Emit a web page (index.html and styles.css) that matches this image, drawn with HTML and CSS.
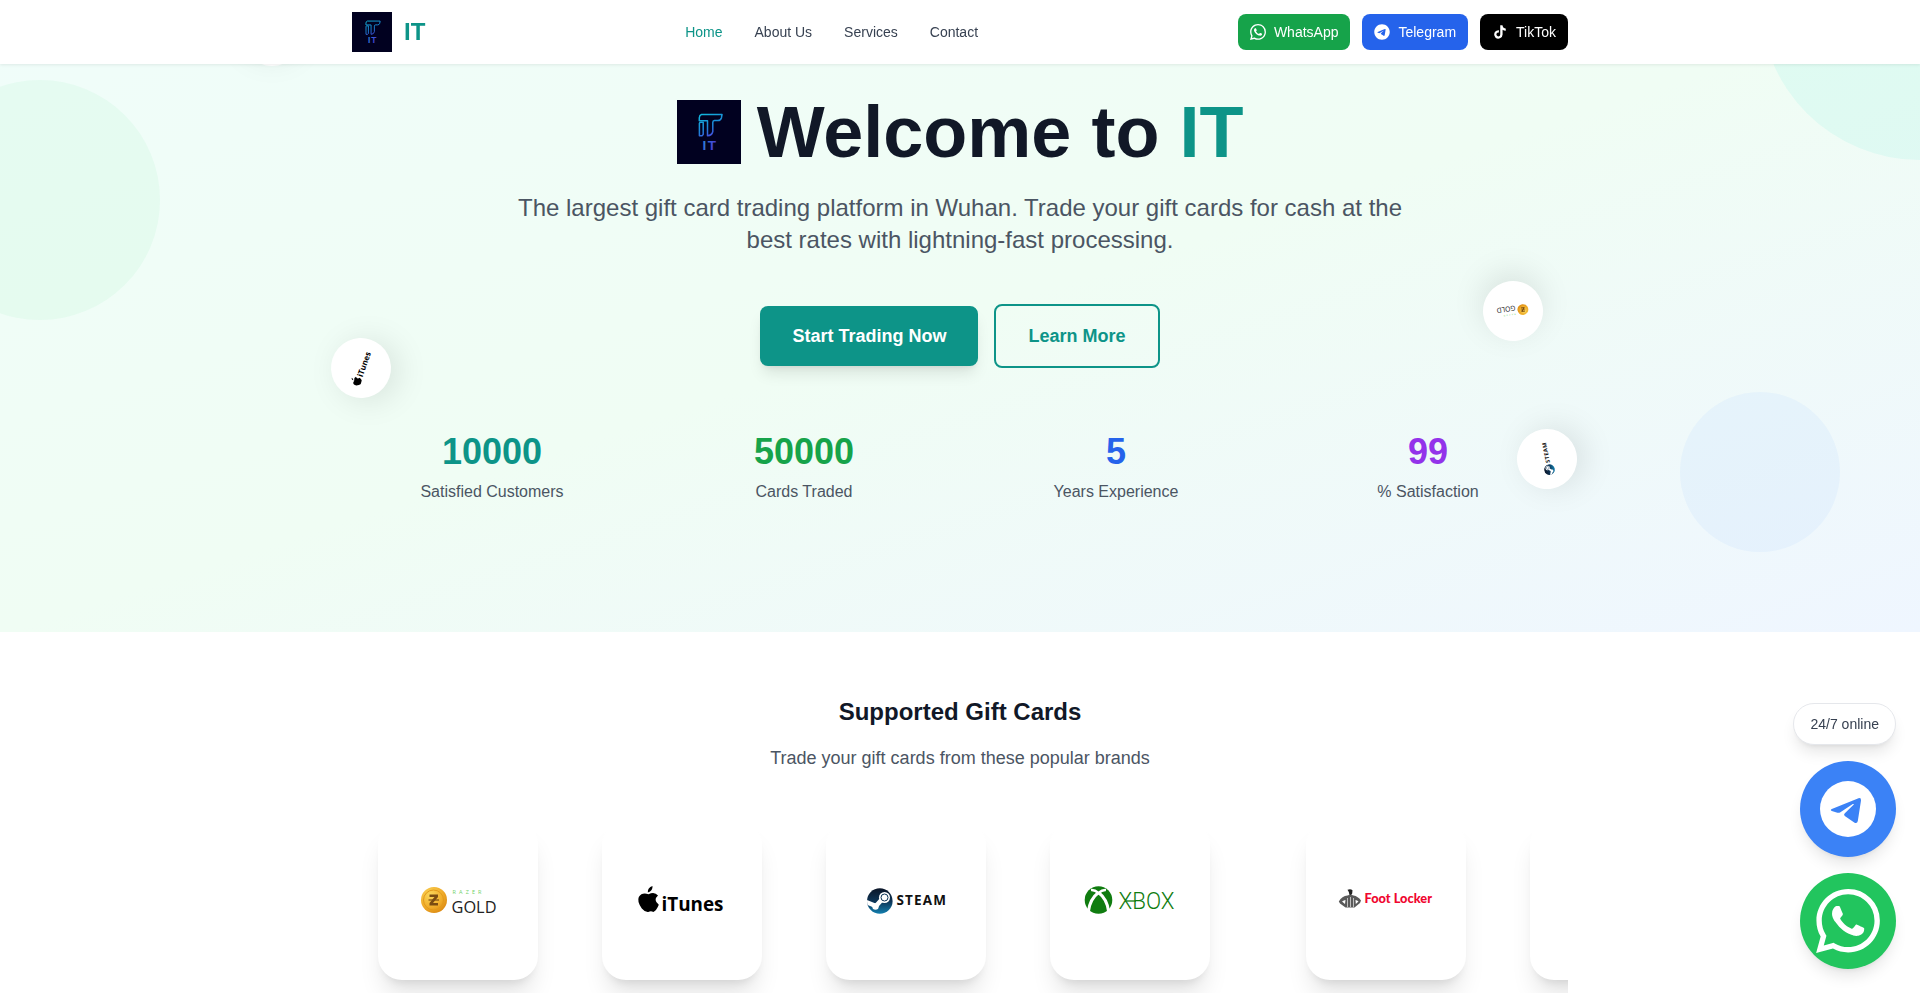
FILE: index.html
```html
<!DOCTYPE html>
<html lang="en">
<head>
    <meta charset="utf-8" />
    <title>IT - Gift Card Trading</title>
    <meta content="width=device-width, initial-scale=1" name="viewport" />
    <link rel="stylesheet" href="styles.css">
</head>
<body>
    <!-- shared icons and brand logos -->
    <svg class="sprite" width="0" height="0">
        <defs>
            <linearGradient id="neon" gradientUnits="userSpaceOnUse" x1="26" y1="14" x2="38" y2="40">
                <stop offset="0" stop-color="#12b5dc"/>
                <stop offset="0.5" stop-color="#1c86d8"/>
                <stop offset="1" stop-color="#5a2ee0"/>
            </linearGradient>
            <linearGradient id="neon-text" x1="0" y1="0" x2="1" y2="0.4">
                <stop offset="0" stop-color="#2a8fd8"/>
                <stop offset="1" stop-color="#4a30d8"/>
            </linearGradient>
            <linearGradient id="steam-fill" x1="0" y1="0" x2="0" y2="1">
                <stop offset="0" stop-color="#0b1426"/>
                <stop offset="0.5" stop-color="#0d3557"/>
                <stop offset="1" stop-color="#1387b8"/>
            </linearGradient>
            <radialGradient id="coin-fill" cx="0.35" cy="0.3" r="0.8">
                <stop offset="0" stop-color="#fbd75a"/>
                <stop offset="0.6" stop-color="#f0ad2b"/>
                <stop offset="1" stop-color="#d98510"/>
            </radialGradient>
            <symbol id="logo" viewBox="0 0 64 64">
                <rect width="64" height="64" fill="#010120"/>
                <g fill="none" stroke="url(#neon)" stroke-width="1.5" stroke-linejoin="round">
                    <path d="M24.500 14.500H45l-.6 3.500q-.8 2.600-3.400 2.600h-3.500q-1.700.2-1.700 2V31.500q-.8 4-5.300 4.200v-15h-8.200v-3q.2-2.600 2.200-3.200z"/>
                    <path d="M22.400 23.400q.2-1.200 1.200-1.200h2.600v12.300l-1.200 1.200h-2.600z"/>
                </g>
                <text x="25.500" y="50" font-size="13.500" textLength="13.500" class="logo-text" fill="url(#neon-text)">IT</text>
            </symbol>
            <symbol id="whatsapp" viewBox="0 0 24 24">
                <path fill="currentColor" d="M17.472 14.382c-.297-.149-1.758-.867-2.030-.967-.273-.099-.471-.148-.670.150-.197.297-.767.966-.940 1.164-.173.199-.347.223-.644.075-.297-.150-1.255-.463-2.390-1.475-.883-.788-1.480-1.761-1.653-2.059-.173-.297-.018-.458.130-.606.134-.133.298-.347.446-.520.149-.174.198-.298.298-.497.099-.198.050-.371-.025-.520-.075-.149-.669-1.612-.916-2.207-.242-.579-.487-.500-.669-.510-.173-.008-.371-.010-.570-.010-.198 0-.520.074-.792.372-.272.297-1.040 1.016-1.040 2.479 0 1.462 1.065 2.875 1.213 3.074.149.198 2.096 3.200 5.077 4.487.709.306 1.262.489 1.694.625.712.227 1.360.195 1.871.118.571-.085 1.758-.719 2.006-1.413.248-.694.248-1.289.173-1.413-.074-.124-.272-.198-.570-.347m-5.421 7.403h-.004a9.870 9.870 0 01-5.031-1.378l-.361-.214-3.741.982.998-3.648-.235-.374a9.860 9.860 0 01-1.510-5.260c.001-5.450 4.436-9.884 9.888-9.884 2.640 0 5.122 1.030 6.988 2.898a9.825 9.825 0 012.893 6.994c-.003 5.450-4.437 9.884-9.885 9.884m8.413-18.297A11.815 11.815 0 0012.050 0C5.495 0 .160 5.335.157 11.892c0 2.096.547 4.142 1.588 5.945L.057 24l6.305-1.654a11.882 11.882 0 005.683 1.448h.005c6.554 0 11.890-5.335 11.893-11.893a11.821 11.821 0 00-3.480-8.413z"/>
            </symbol>
            <symbol id="telegram" viewBox="0 0 496 512">
                <path fill="currentColor" d="M248 8C111.033 8 0 119.033 0 256s111.033 248 248 248 248-111.033 248-248S384.967 8 248 8zm114.952 168.660c-3.732 39.215-19.881 134.378-28.100 178.300-3.476 18.584-10.322 24.816-16.948 25.425-14.400 1.326-25.338-9.517-39.287-18.661-21.827-14.308-34.158-23.215-55.346-37.177-24.485-16.135-8.612-25 5.342-39.500 3.652-3.793 67.107-61.510 68.335-66.746.153-.655.300-3.100-1.154-4.384s-3.590-.849-5.135-.500q-3.283.746-104.608 69.142-14.845 10.194-26.894 9.934c-8.855-.191-25.888-5.006-38.551-9.123-15.531-5.048-27.875-7.717-26.800-16.291q.840-6.700 18.450-13.700 108.446-47.248 144.628-62.300c68.872-28.647 83.183-33.623 92.511-33.789 2.052-.034 6.639.474 9.610 2.885a10.452 10.452 0 013.530 6.716 43.765 43.765 0 01.417 9.769z"/>
            </symbol>
            <symbol id="plane" viewBox="0 0 56 56">
                <circle cx="28" cy="28" r="28" fill="#fff"/>
                <path fill="#3b82f6" d="M11.800 28 38.500 17.200q2.800-.6 2.500 2.300L37.800 40q-.6 3-3.200 1.700L24.800 35q-1.400-1.200-.2-2.600l9.200-8.900q.3-1-1-.4L20 31.500q-1.200.6-2.600.2L11.800 30q-2-1 0-2z"/>
            </symbol>
            <symbol id="tiktok" viewBox="0 0 24 24">
                <path fill="currentColor" d="M19.590 6.690a4.830 4.830 0 01-3.770-4.250V2h-3.450v13.670a2.890 2.890 0 01-5.200 1.740 2.890 2.890 0 012.310-4.640 2.930 2.930 0 01.880.130V9.400a6.840 6.840 0 00-1-.050A6.330 6.330 0 005 20.100a6.340 6.340 0 0010.860-4.430v-7a8.160 8.160 0 004.770 1.520v-3.400a4.850 4.850 0 01-1-.100z"/>
            </symbol>
            <symbol id="razer" viewBox="0 0 96 96">
                <circle cx="24" cy="48" r="13" fill="url(#coin-fill)"/>
                <circle cx="23.500" cy="48" r="10" fill="none" stroke="#e39a1b" stroke-width="1"/>
                <path d="M19.500 42.500h8.500v2.500l-5 6h5v2.500h-8.500v-2.500l5-6h-5z" fill="#7a4c12"/>
                <path d="M18.500 48h10.500" stroke="#7a4c12" stroke-width="1.200"/>
                <text x="42.500" y="42" font-size="5.500" textLength="29" class="brand-text" fill="#6fd168">RAZER</text>
                <text x="41.500" y="60.500" font-size="17" textLength="45" lengthAdjust="spacingAndGlyphs" class="brand-text thin" fill="#222">GOLD</text>
            </symbol>
            <symbol id="itunes" viewBox="0 0 96 96">
                <path d="M13.800 40.500q-.3-4.800 4.700-6.500.5 4.800-4.700 6.500z" fill="#000"/>
                <path d="M14.500 42.300q6-3.200 9.500 1.200-5.200 4.500.8 9.300-2.300 6-5.500 7.200-2.300-1.300-5 0-3 .5-6.500-3.500-5-7-3-11.500Q8 40 14.500 42.300z" fill="#000"/>
                <text x="27.500" y="59" font-size="19.500" textLength="62" lengthAdjust="spacingAndGlyphs" class="brand-text bold" fill="#000">iTunes</text>
            </symbol>
            <symbol id="steam" viewBox="0 0 96 96">
                <clipPath id="steam-clip"><circle cx="21.800" cy="49" r="12.800"/></clipPath>
                <g clip-path="url(#steam-clip)">
                    <rect x="8" y="36" width="28" height="27" fill="url(#steam-fill)"/>
                    <path d="M7 49.500 18 54l8-9" fill="none" stroke="#fff" stroke-width="4.500"/>
                    <circle cx="26.500" cy="45.500" r="5.500" fill="#fff"/>
                    <circle cx="26.500" cy="45.500" r="3.500" fill="#fff" stroke="#0d3557" stroke-width="1"/>
                    <circle cx="17.500" cy="54.500" r="3.200" fill="#fff"/>
                </g>
                <text x="38.500" y="53.300" font-size="13.500" textLength="49.500" class="brand-text bold" fill="#111">STEAM</text>
            </symbol>
            <symbol id="xbox" viewBox="0 0 96 96">
                <circle cx="16.500" cy="48" r="13.800" fill="#107c10"/>
                <path d="M9 38q3.500-.5 7.500 3 4-3.500 7.500-3" fill="none" stroke="#fff" stroke-width="2.400"/>
                <path d="M16.500 40.500Q8 47 6.500 59M16.500 40.500Q25 47 26.500 59" fill="none" stroke="#fff" stroke-width="3"/>
                <text x="36.500" y="57" font-size="23" textLength="56" lengthAdjust="spacingAndGlyphs" class="brand-text xbox-text" fill="#107c10">XBOX</text>
                <path d="M44 49h10" stroke="#107c10" stroke-width="1.300"/>
            </symbol>
            <symbol id="footlocker" viewBox="0 0 96 96">
                <path d="M9.500 37.800q3-1.500 5 .4l-.3 3.300-1 1.500h-1.700l-.7-3z" fill="#222"/>
                <path d="M9.500 43.500q3-1.500 6 0 4.500.8 7.500 5l-1 2.500-5.500 4.500h-9L2 51.500.8 49.500q3.200-5.500 8.700-6z" fill="#5a5a5a"/>
                <path d="M9.500 46v9M12.500 45v10M15.500 46v9" stroke="#d8d8d8" stroke-width=".8" fill="none"/>
                <path d="M4 49.500q2-1.500 3.500-1.500l-.5 4zM20.500 49.500q-1.500-1.500-3-1.500l.3 4z" fill="#fff"/>
                <text x="26.500" y="51.300" font-size="13" textLength="67.500" lengthAdjust="spacingAndGlyphs" class="brand-text locker-text" fill="#f0062f">Foot Locker</text>
            </symbol>
        </defs>
    </svg>

    <header class="header">
        <div class="container header-inner">
            <a class="brand" href="#">
                <svg class="brand-logo"><use href="#logo"/></svg>
                <span>IT</span>
            </a>
            <nav class="nav">
                <a class="active" href="#">Home</a>
                <a href="#">About Us</a>
                <a href="#">Services</a>
                <a href="#">Contact</a>
            </nav>
            <div class="socials">
                <a class="social social-whatsapp" href="#"><svg><use href="#whatsapp"/></svg>WhatsApp</a>
                <a class="social social-telegram" href="#"><svg><use href="#telegram"/></svg>Telegram</a>
                <a class="social social-tiktok" href="#"><svg><use href="#tiktok"/></svg>TikTok</a>
            </div>
        </div>
    </header>

    <section class="hero">
        <div class="blob blob-teal"></div>
        <div class="blob blob-green"></div>
        <div class="blob blob-blue"></div>
        <div class="floating float-xbox"></div>
        <div class="floating float-itunes"><svg><use href="#itunes"/></svg></div>
        <div class="floating float-razer"><svg><use href="#razer"/></svg></div>
        <div class="floating float-steam"><svg><use href="#steam"/></svg></div>

        <div class="container hero-inner">
            <div class="hero-title">
                <svg class="hero-logo"><use href="#logo"/></svg>
                <h1>Welcome to <span>IT</span></h1>
            </div>
            <p class="hero-text">The largest gift card trading platform in Wuhan. Trade your gift cards for cash at the best rates with lightning-fast processing.</p>
            <div class="hero-actions">
                <a class="btn btn-primary" href="#">Start Trading Now</a>
                <a class="btn btn-outline" href="#">Learn More</a>
            </div>
            <div class="stats">
                <div class="stat teal"><strong>10000</strong><span>Satisfied Customers</span></div>
                <div class="stat green"><strong>50000</strong><span>Cards Traded</span></div>
                <div class="stat blue"><strong>5</strong><span>Years Experience</span></div>
                <div class="stat purple"><strong>99</strong><span>% Satisfaction</span></div>
            </div>
        </div>
    </section>

    <section class="cards">
        <div class="container">
            <h2>Supported Gift Cards</h2>
            <p class="cards-text">Trade your gift cards from these popular brands</p>
            <div class="marquee">
                <div class="marquee-group">
                    <div class="card"><svg><use href="#razer"/></svg></div>
                    <div class="card"><svg><use href="#itunes"/></svg></div>
                    <div class="card"><svg><use href="#steam"/></svg></div>
                    <div class="card"><svg><use href="#xbox"/></svg></div>
                </div>
                <div class="marquee-group">
                    <div class="card"><svg><use href="#footlocker"/></svg></div>
                    <div class="card"></div>
                </div>
            </div>
        </div>
    </section>

    <div class="contact">
        <div class="contact-label">24/7 online</div>
        <a class="contact-btn contact-telegram" href="#"><svg><use href="#plane"/></svg></a>
        <a class="contact-btn contact-whatsapp" href="#"><svg><use href="#whatsapp"/></svg></a>
    </div>
</body>
</html>
```

FILE: styles.css
```css
*{
    box-sizing: border-box;
    margin: 0;
    padding: 0;
}
html,body{
    height: 100%;
    overflow: hidden;
}
body{
    font-family: "Liberation Sans", Arial, sans-serif;
    font-size: 16px;
    line-height: 24px;
    color: #111827;
    background: #fff;
}
a{
    color: inherit;
    text-decoration: none;
}
svg{
    display: block;
    flex: none;
}
.sprite{
    position: absolute;
}
.container{
    max-width: 1280px;
    margin: 0 auto;
    padding: 0 32px;
}
.logo-text{
    font-family: "Liberation Sans", Arial, sans-serif;
    font-weight: 700;
}
.brand-text{font-family: "Open Sans", "Noto Sans", sans-serif;}
.brand-text.bold{font-weight: 700;}
.brand-text.thin{font-weight: 400;}
.brand-text.xbox-text{
    font-family: Roboto, sans-serif;
    font-weight: 300;
}
.brand-text.locker-text{
    font-family: Lato, sans-serif;
    font-weight: 900;
}

/* header */
.header{
    position: fixed;
    top: 0;
    left: 0;
    right: 0;
    z-index: 50;
    height: 64px;
    background: #fff;
    box-shadow: 0 1px 3px rgba(0,0,0,.08);
}
.header-inner{
    display: flex;
    align-items: center;
    justify-content: space-between;
    height: 64px;
}
.brand{
    display: flex;
    align-items: center;
    gap: 12px;
    font-size: 24px;
    line-height: 32px;
    font-weight: 700;
    color: #0d9488;
}
.brand-logo{
    width: 40px;
    height: 40px;
}
.nav{
    display: flex;
    gap: 32px;
    font-size: 14px;
    line-height: 20px;
    color: #374151;
}
.nav .active{
    color: #0d9488;
}
.socials{
    display: flex;
    gap: 12px;
}
.social{
    display: flex;
    align-items: center;
    gap: 8px;
    padding: 8px 12px;
    border-radius: 8px;
    font-size: 14px;
    line-height: 20px;
    color: #fff;
}
.social svg{
    width: 16px;
    height: 16px;
}
.social-whatsapp{background: #16a34a;}
.social-telegram{background: #2563eb;}
.social-tiktok{background: #000;}

/* hero */
.hero{
    position: relative;
    overflow: hidden;
    height: 632px;
    padding-top: 96px;
    background: linear-gradient(to bottom right, #f0fdfa, #f0fdf4, #eff6ff);
}
.hero-inner{
    position: relative;
    text-align: center;
}
.blob{
    position: absolute;
    border-radius: 50%;
}
.blob-teal{
    top: -160px;
    right: -160px;
    width: 320px;
    height: 320px;
    background: rgba(153,246,228,.2);
}
.blob-green{
    top: 80px;
    left: -80px;
    width: 240px;
    height: 240px;
    background: rgba(187,247,208,.2);
}
.blob-blue{
    right: 80px;
    bottom: 80px;
    width: 160px;
    height: 160px;
    background: rgba(191,219,254,.2);
}
.floating{
    position: absolute;
    display: flex;
    align-items: center;
    justify-content: center;
    width: 60px;
    height: 60px;
    border-radius: 50%;
    background: #fff;
    box-shadow: 0 8px 32px rgba(0,0,0,.1);
}
.floating svg{
    width: 40px;
    height: 40px;
}
.float-xbox{
    top: 6px;
    left: 242px;
    transform: rotate(180deg);
}
.float-itunes{
    top: 338px;
    left: 331px;
    transform: rotate(-71deg);
}
.float-razer{
    top: 281px;
    left: 1483px;
    transform: rotate(172deg);
}
.float-steam{
    top: 429px;
    left: 1517px;
    transform: rotate(-101deg);
}
.hero-title{
    display: flex;
    align-items: center;
    justify-content: center;
    gap: 16px;
    margin-bottom: 24px;
}
.hero-logo{
    width: 64px;
    height: 64px;
}
.hero-title h1{
    font-size: 72px;
    line-height: 72px;
    font-weight: 700;
}
.hero-title span{
    color: #0d9488;
}
.hero-text{
    max-width: 896px;
    margin: 0 auto 48px;
    font-size: 24px;
    line-height: 32px;
    color: #4b5563;
}
.hero-actions{
    display: flex;
    align-items: center;
    justify-content: center;
    gap: 16px;
    margin-bottom: 64px;
}
.btn{
    padding: 16px 32px;
    border-radius: 8px;
    font-size: 18px;
    line-height: 28px;
    font-weight: 700;
}
.btn-primary{
    background: #0d9488;
    color: #fff;
    box-shadow: 0 10px 15px -3px rgba(0,0,0,.1), 0 4px 6px -4px rgba(0,0,0,.1);
}
.btn-outline{
    border: 2px solid #0d9488;
    color: #0d9488;
}
.stats{
    display: grid;
    grid-template-columns: repeat(4, 1fr);
    gap: 32px;
}
.stat{
    display: flex;
    flex-direction: column;
    gap: 8px;
}
.stat strong{
    font-size: 36px;
    line-height: 40px;
}
.stat span{
    color: #4b5563;
}
.teal strong{color: #0d9488;}
.green strong{color: #16a34a;}
.blue strong{color: #2563eb;}
.purple strong{color: #9333ea;}

/* supported cards */
.cards{
    padding-top: 64px;
    text-align: center;
}
.cards h2{
    margin-bottom: 16px;
    font-size: 24px;
    line-height: 32px;
    font-weight: 700;
}
.cards-text{
    font-size: 18px;
    line-height: 28px;
    color: #4b5563;
}
.marquee{
    display: flex;
    gap: 96px;
    overflow: hidden;
    margin-top: 32px;
    padding: 16px 0 40px 25.5px;
}
.marquee-group{
    display: flex;
    flex: none;
    gap: 64px;
}
.card{
    display: flex;
    flex: none;
    align-items: center;
    justify-content: center;
    width: 160px;
    height: 160px;
    border-radius: 24px;
    background: #fff;
    box-shadow: 0 20px 25px -5px rgba(0,0,0,.1), 0 8px 10px -6px rgba(0,0,0,.1);
}
.card svg{
    width: 96px;
    height: 96px;
}

/* contact buttons */
.contact{
    position: fixed;
    right: 24px;
    bottom: 24px;
    z-index: 50;
    display: flex;
    flex-direction: column;
    align-items: flex-end;
    gap: 16px;
}
.contact-label{
    padding: 10px 16px;
    border: 1px solid #e5e7eb;
    border-radius: 21px;
    background: #fff;
    box-shadow: 0 10px 15px -3px rgba(0,0,0,.1), 0 4px 6px -4px rgba(0,0,0,.1);
    font-size: 14px;
    line-height: 20px;
    color: #374151;
}
.contact-btn{
    display: flex;
    align-items: center;
    justify-content: center;
    width: 96px;
    height: 96px;
    border-radius: 50%;
    color: #fff;
    box-shadow: 0 10px 15px -3px rgba(0,0,0,.1), 0 4px 6px -4px rgba(0,0,0,.1);
}
.contact-telegram{background: #3b82f6;}
.contact-whatsapp{background: #22c55e;}
.contact-telegram svg{
    width: 56px;
    height: 56px;
}
.contact-whatsapp svg{
    width: 64px;
    height: 64px;
}
```
